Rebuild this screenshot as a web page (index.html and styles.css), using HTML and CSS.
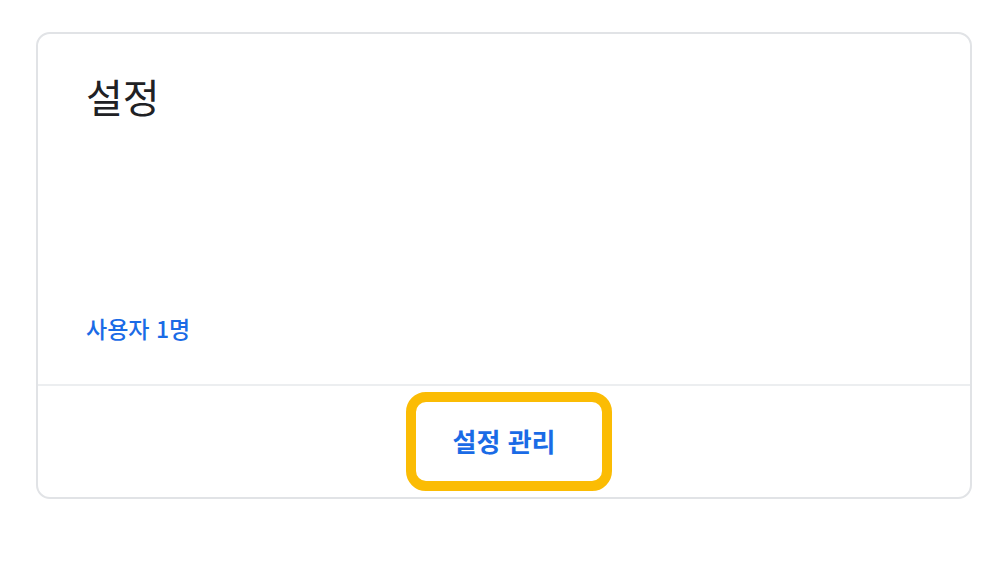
FILE: index.html
```html
<!DOCTYPE html>
<html lang="ko">
<head>
<meta charset="utf-8">
<link rel="stylesheet" href="styles.css">
</head>
<body>
<div class="card">
  <div class="card-body">
    <h2 class="card-title">설정</h2>
    <a class="card-link" href="#">사용자 1명</a>
  </div>
  <div class="card-footer">
    <button class="manage-btn">설정 관리</button>
  </div>
</div>
</body>
</html>
```
FILE: styles.css
```css
* { box-sizing: border-box; }
html, body {
  margin: 0;
  padding: 0;
  background: #ffffff;
  font-family: "Noto Sans CJK KR", "Noto Sans", sans-serif;
}
body {
  padding: 32px 34px 0 36px;
}
.card {
  width: 936px;
  height: 467px;
  border: 2px solid #e1e3e6;
  border-radius: 14px;
  display: flex;
  flex-direction: column;
  overflow: hidden;
}
.card-body {
  height: 352px;
  padding: 36px 49px 0 48px;
  display: flex;
  flex-direction: column;
  border-bottom: 2px solid #eceef0;
}
.card-title {
  margin: 0;
  font-size: 40px;
  line-height: 52px;
  font-weight: 400;
  color: #202124;
}
.card-link {
  margin-top: auto;
  margin-bottom: 40px;
  font-size: 23px;
  line-height: 32px;
  font-weight: 500;
  color: #1a6be6;
  text-decoration: none;
}
.card-footer {
  flex: 1;
  display: flex;
  align-items: center;
  justify-content: center;
  padding-left: 10px;
}
.manage-btn {
  width: 206px;
  height: 99px;
  border: 10px solid #fbbc04;
  border-radius: 20px;
  background: #ffffff;
  font-family: "Noto Sans CJK KR", "Noto Sans", sans-serif;
  font-size: 26px;
  font-weight: 700;
  color: #1a6be6;
  padding: 0 10px 2px 0;
  cursor: pointer;
}
```
